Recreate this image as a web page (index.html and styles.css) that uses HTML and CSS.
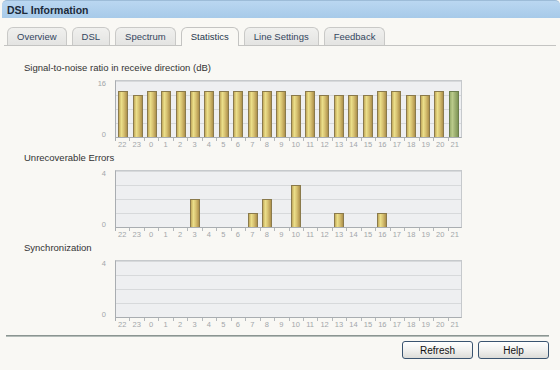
FILE: index.html
```html
<!DOCTYPE html>
<html lang="en">
<head>
    <meta charset="UTF-8">
    <title>DSL Information</title>
    <link rel="stylesheet" href="styles.css">
</head>
<body>

<div class="titlebar">DSL Information</div>

<div class="tabs">
    <a class="tab" href="#">Overview</a>
    <a class="tab" href="#">DSL</a>
    <a class="tab" href="#">Spectrum</a>
    <a class="tab active" href="#">Statistics</a>
    <a class="tab" href="#">Line Settings</a>
    <a class="tab" href="#">Feedback</a>
</div>

<div class="content">

    <div class="section">
        <div class="section-title">Signal-to-noise ratio in receive direction (dB)</div>
        <div class="chart" data-max="16" data-values="13,12,13,13,13,13,13,13,13,13,13,13,12,13,12,12,12,12,13,13,12,12,13,13" data-current="true">
            <div class="y-axis"><span>16</span><span class="y-zero">0</span></div>
            <div class="plot"></div>
            <div class="ticks"></div>
            <div class="x-axis"></div>
        </div>
    </div>

    <div class="section">
        <div class="section-title">Unrecoverable Errors</div>
        <div class="chart" data-max="4" data-values="0,0,0,0,0,2,0,0,0,1,2,0,3,0,0,1,0,0,1,0,0,0,0,0">
            <div class="y-axis"><span>4</span><span class="y-zero">0</span></div>
            <div class="plot"></div>
            <div class="ticks"></div>
            <div class="x-axis"></div>
        </div>
    </div>

    <div class="section">
        <div class="section-title">Synchronization</div>
        <div class="chart" data-max="4" data-values="0,0,0,0,0,0,0,0,0,0,0,0,0,0,0,0,0,0,0,0,0,0,0,0">
            <div class="y-axis"><span>4</span><span class="y-zero">0</span></div>
            <div class="plot"></div>
            <div class="ticks"></div>
            <div class="x-axis"></div>
        </div>
    </div>

</div>

<div class="footer">
    <button class="button">Refresh</button>
    <button class="button">Help</button>
</div>

<script src="charts.js"></script>
</body>
</html>
```

FILE: styles.css
```css
body {
    font-family: "Liberation Sans", Arial, sans-serif;
    font-size: 9.5px;
    background-color: #f9f8f4;
    color: #333;
    margin: 0;
}

.titlebar {
    height: 18px;
    line-height: 18px;
    margin-left: 2px;
    padding-left: 5px;
    border-top: 1px solid #9dbcd8;
    box-sizing: border-box;
    border-radius: 5px 5px 0 0;
    background: linear-gradient(#bad7f1, #a7cae9);
    color: #1c2a3a;
    font-size: 10.5px;
    font-weight: bold;
}

.tabs {
    display: flex;
    gap: 5px;
    margin: 9px 4px 0 4px;
    padding-left: 3px;
    border-bottom: 1px solid #c4c4c2;
}

.tab {
    height: 18px;
    line-height: 18px;
    padding: 0 9px;
    box-sizing: border-box;
    border: 1px solid #c9c9c7;
    border-bottom: none;
    border-radius: 6px 6px 0 0;
    background: linear-gradient(#f0f0ee, #e4e4e2);
    color: #34465e;
    text-decoration: none;
}

.tab.active {
    height: 19px;
    margin-bottom: -1px;
    background: #f9f8f4;
    border-color: #c4c4c2;
    color: #26374c;
}

.content {
    padding: 16px 0 0 24px;
}

.section {
    margin-bottom: 3px;
}

.section-title {
    height: 12px;
    line-height: 12px;
    margin-bottom: 6px;
    color: #333;
}

.chart {
    display: grid;
    grid-template-columns: 82px 347px;
    grid-template-rows: 58px 3px 8px;
    column-gap: 9px;
}

.y-axis {
    display: flex;
    flex-direction: column;
    justify-content: space-between;
    align-items: flex-end;
    font-size: 7.5px;
    line-height: 8px;
    color: #a2a6aa;
}

.y-zero {
    margin-bottom: -1px;
}

.plot {
    display: flex;
    align-items: flex-end;
    box-sizing: border-box;
    border: 1px solid #c6c9cc;
    border-left-color: #a9adb1;
    border-bottom-color: #a9adb1;
    background: repeating-linear-gradient(to top, #eeeff1 0 13px, #d7d9db 13px 14px);
}

.slot {
    flex: 1;
    display: flex;
    justify-content: center;
    align-items: flex-end;
    height: 100%;
}

.bar {
    width: 10px;
    box-sizing: border-box;
    border: 1px solid #8a7a4c;
    border-bottom: none;
    background: linear-gradient(to right, #c3aa5c 0%, #ebdf8a 30%, #d8c272 60%, #ae914c 100%);
}

.bar.current {
    border-color: #6c7e4e;
    background: linear-gradient(to right, #9aae6e 0%, #bacb8b 30%, #a0b274 60%, #7f9657 100%);
}

.ticks {
    grid-column: 2;
    border-left: 1px solid #a9adb1;
    background: repeating-linear-gradient(to right, transparent 0 13.46px, #b4b8bc 13.46px 14.46px);
}

.x-axis {
    grid-column: 2;
    display: flex;
    font-size: 7.5px;
    line-height: 8px;
    color: #a2a6aa;
}

.x-axis span {
    flex: 1;
    text-align: center;
}

.footer {
    display: flex;
    justify-content: flex-end;
    gap: 5px;
    margin: 6px 11px 0 6px;
    padding-top: 5px;
    border-top: 1px solid #8b9591;
    box-shadow: inset 0 1px 0 #b4bcb8;
}

.button {
    width: 71px;
    height: 18px;
    padding: 0;
    font-family: "Liberation Sans", Arial, sans-serif;
    font-size: 10px;
    color: #111;
    border: 1px solid #3a5470;
    border-radius: 3px;
    background: linear-gradient(#ffffff, #f1f1ef 50%, #dcdcd8);
    cursor: pointer;
}
```

FILE: charts.js
```js
// hour labels run from 22:00 yesterday up to the current hour
var hours = [22, 23];
for (var h = 0; h <= 21; h++) {
    hours.push(h);
}

var charts = document.querySelectorAll(".chart");

charts.forEach(function (chart) {
    var max = Number(chart.dataset.max);
    var values = chart.dataset.values.split(",").map(Number);
    var plot = chart.querySelector(".plot");
    var axis = chart.querySelector(".x-axis");
    var inner = 56; // plot height without borders

    values.forEach(function (value, i) {
        var slot = document.createElement("div");
        slot.className = "slot";
        if (value > 0) {
            var bar = document.createElement("div");
            bar.className = "bar";
            if (chart.dataset.current && i == values.length - 1) {
                bar.className += " current";
            }
            bar.style.height = Math.round(value / max * inner) + "px";
            slot.appendChild(bar);
        }
        plot.appendChild(slot);

        var label = document.createElement("span");
        label.textContent = hours[i];
        axis.appendChild(label);
    });
});
```
